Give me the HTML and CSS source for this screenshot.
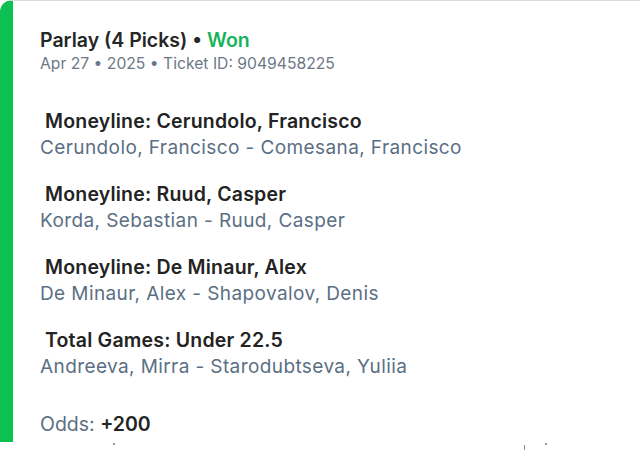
FILE: index.html
```html
<!DOCTYPE html>
<html lang="en">
<head>
  <meta charset="UTF-8"/>
  <meta name="viewport" content="width=device-width, initial-scale=1.0"/>
  <title>Parlay Ticket</title>
  <link rel="stylesheet" href="styles.css">
</head>
<body>

  <div class="ticket">
    <div class="ticket-head">
      <h2>Parlay (4 Picks) &bull; <span class="won">Won</span></h2>
      <p class="meta">Apr 27 &bull; 2025 &bull; Ticket ID: 9049458225</p>
    </div>

    <div class="picks">
      <div class="pick">
        <h3>Moneyline: Cerundolo, Francisco</h3>
        <p>Cerundolo, Francisco - Comesana, Francisco</p>
      </div>
      <div class="pick">
        <h3>Moneyline: Ruud, Casper</h3>
        <p>Korda, Sebastian - Ruud, Casper</p>
      </div>
      <div class="pick">
        <h3>Moneyline: De Minaur, Alex</h3>
        <p>De Minaur, Alex - Shapovalov, Denis</p>
      </div>
      <div class="pick">
        <h3>Total Games: Under 22.5</h3>
        <p>Andreeva, Mirra - Starodubtseva, Yuliia</p>
      </div>
    </div>

    <p class="odds">Odds: <strong>+200</strong></p>
  </div>

  <!-- top of the next card peeking in -->
  <div class="next-peek">
    <span class="dot d1"></span>
    <span class="tick"></span>
    <span class="dot d2"></span>
  </div>

</body>
</html>
```

FILE: styles.css
```css
* {
  margin: 0; padding: 0;
  box-sizing: border-box;
  font-family: Inter, 'Noto Sans', sans-serif;
}

body {
  background: #fff;
  color: #222;
  width: 640px;
  height: 450px;
  overflow: hidden;
}

.ticket {
  height: 442px;
  background: #fff;
  border-left: 13px solid #0cc152;
  border-top: 1px solid #dcdcdc;
  border-radius: 12px 0 0 0;
  padding: 27px 0 0 27px;
}

.ticket-head h2 {
  font-size: 19.5px;
  font-weight: 600;
  line-height: 25px;
  color: #262626;
}

.won {
  color: #17b35a;
}

.meta {
  font-size: 15.7px;
  line-height: 22px;
  color: #6d7886;
}

.picks {
  margin-top: 34px;
  display: flex;
  flex-direction: column;
  gap: 21px;
}

.pick h3 {
  font-size: 19.5px;
  font-weight: 600;
  line-height: 25px;
  letter-spacing: 0.2px;
  color: #232323;
  padding-left: 5px;
}

.pick p {
  font-size: 19px;
  line-height: 27px;
  letter-spacing: 0.4px;
  color: #5b6f84;
}

.odds {
  margin-top: 32px;
  font-size: 19.5px;
  line-height: 25px;
  color: #5b6f84;
}

.odds strong {
  color: #232323;
  font-weight: 600;
}

.next-peek {
  display: flex;
  align-items: flex-start;
  height: 8px;
  padding-top: 1px;
}

.dot {
  width: 2px;
  height: 2px;
  background: #9a9a9a;
}

.d1 { margin-left: 113px; }
.d2 { margin-left: 20px; }

.tick {
  width: 1px;
  height: 8px;
  margin-left: 409px;
  margin-top: 2px;
  background: #8a8a8a;
}
```
